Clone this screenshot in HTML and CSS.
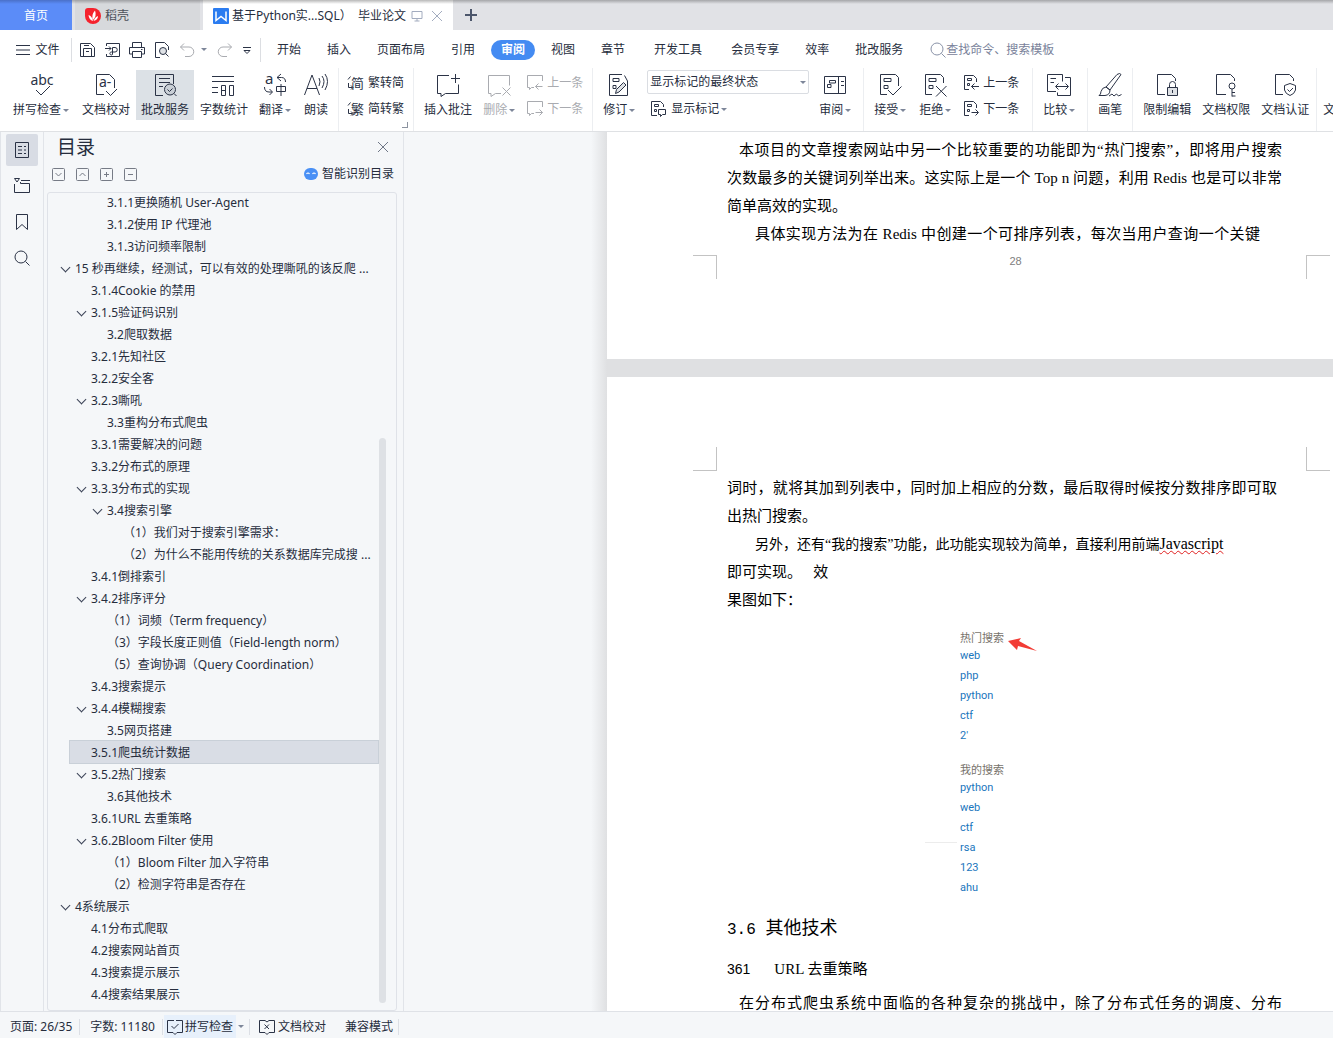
FILE: index.html
```html
<!DOCTYPE html>
<html lang="zh-CN">
<head>
    <meta charset="UTF-8">
    <title>毕业论文</title>
    <link rel="stylesheet" href="styles.css">
</head>
<body>
    <!-- icon sprite -->
    <svg class="sprite" aria-hidden="true">
        <symbol id="i-menu" viewBox="0 0 16 16"><path d="M1 3.500h14M1 8h14M1 12.500h14"/></symbol>
        <symbol id="i-save" viewBox="0 0 16 16"><path d="M.5 1.500h10l4 4v9h-14zM3.500 14.500v-8h8v8M4 3.500h5M6 9.500h3"/></symbol>
        <symbol id="i-export" viewBox="0 0 16 16"><path d="M1.500 4V1.500h13v13h-13V12M0 6.500h6M4 4.500l2 2-2 2M7.500 12.500v-7h2.500a2.200 2.200 0 0 1 0 4.500H6.500a1.500 1.500 0 1 0 1 2.500"/></symbol>
        <symbol id="i-print" viewBox="0 0 16 16"><path d="M3.500 5V.5h9V5M3.500 12H.5V5.500h15V12h-3M3.500 9.500h9v6h-9zM12 7.500h1.500"/></symbol>
        <symbol id="i-preview" viewBox="0 0 16 16"><path d="M6 15.500H1.500v-15h9l4 4V8"/><circle cx="9" cy="9" r="3.500" fill="#dfe2e6"/><path d="M11.500 11.500l3 3"/></symbol>
        <symbol id="i-undo" viewBox="0 0 16 16"><path d="M5 1.500L1.500 5 5 8.500M1.500 5H10a4.500 4.500 0 0 1 0 9.500H6"/></symbol>
        <symbol id="i-redo" viewBox="0 0 16 16"><path d="M11 1.500L14.500 5 11 8.500M14.500 5H6a4.500 4.500 0 0 0 0 9.500h4"/></symbol>
        <symbol id="i-more" viewBox="0 0 10 10"><path d="M1 2.500h8M2 5.500l3 3 3-3z"/></symbol>
        <symbol id="i-search" viewBox="0 0 16 16"><circle cx="7" cy="7" r="6"/><path d="M11.500 11.500l4 4"/></symbol>
        <symbol id="i-close" viewBox="0 0 12 12"><path d="M1 1l10 10M11 1L1 11"/></symbol>
        <symbol id="i-screen" viewBox="0 0 12 12"><path d="M1 1.500h10v7H1zM6 8.500v2.500M3.500 11h5"/></symbol>
        <symbol id="i-plus" viewBox="0 0 12 12"><path d="M6 0v12M0 6h12" stroke-width="2"/></symbol>

        <symbol id="i-abc" viewBox="0 0 24 24"><text x="12" y="12" font-size="14" text-anchor="middle">abc</text><path d="M6 17l5 5 9-9"/></symbol>
        <symbol id="i-proof" viewBox="0 0 24 24"><path d="M10 21.500H2.500v-20h13l5 5V15"/><text x="5" y="14" font-size="14">a-</text><path d="M12 18l4.500 4.500L23 16"/></symbol>
        <symbol id="i-review" viewBox="0 0 24 24"><path d="M10 22.500H2.500v-21h18V11M6 5.500h11M6 9.500h11M6 13.500h4"/><circle cx="17" cy="16.500" r="5.500" fill="#c9cfd6"/><path d="M14.500 16.500l2 2 3-3M21 20.500l2.500 2.500"/></symbol>
        <symbol id="i-count" viewBox="0 0 24 24"><path d="M0 3.500h22M0 8.500h22M0 14.500h6M0 19.500h6M9.500 12.500h4v10h-4zM17.500 12.500h4v10h-4zM9.500 17.500h4"/></symbol>
        <symbol id="i-trans" viewBox="0 0 24 24"><text x="1" y="11" font-size="15">a</text><path d="M17 1l-4 3.500 4 3.500M13 4.500h4.500q4 0 4 4.500M.5 14q0 5 4.500 5h3M5.500 16l3 3-3 3M12.500 13.500h9v5h-9zM17 11v12"/></symbol>
        <symbol id="i-read" viewBox="0 0 24 24"><path d="M.5 22L8 2l7.500 20M3 15.500h10M15 5q2 3.500 0 8M18 3q4 5 0 12M21 1q5 7 0 16"/></symbol>
        <symbol id="i-jian" viewBox="0 0 16 16"><text x="3" y="13" font-size="13">简</text><path d="M2.500 1.500L0 4.500M.5 8v4.500h4M3 10.500l2 2-2 2"/></symbol>
        <symbol id="i-fan" viewBox="0 0 16 16"><text x="3" y="13" font-size="13">繁</text><path d="M2.500 1.500L0 4.500M.5 8v4.500h4M3 10.500l2 2-2 2"/></symbol>
        <symbol id="i-note" viewBox="0 0 24 24"><path d="M13 2.500H1.500v18H5v3l4.500-3h13v-9M19.500 1v9M15 5.500h9"/></symbol>
        <symbol id="i-delnote" viewBox="0 0 24 24"><path d="M13 20.500H7.500l-4.500 3v-3H.5v-18h21v10M14.500 14.500l8 8M22.500 14.500l-8 8"/></symbol>
        <symbol id="i-prevnote" viewBox="0 0 16 16"><path d="M7 12.500H4.500l-2 2v-2h-2v-12h15V6M15.500 11.500H8.500M11.500 8.500l-3 3 3 3"/></symbol>
        <symbol id="i-nextnote" viewBox="0 0 16 16"><path d="M7 12.500H4.500l-2 2v-2h-2v-12h15V6M8.500 11.500h7M12.500 8.500l3 3-3 3"/></symbol>
        <symbol id="i-revise" viewBox="0 0 24 24"><path d="M14 1.500H1.500v21h18V8l-3-5.500M5 5.500h6v3H5zM5 12.500h3v3H5z"/><path d="M7.500 20.500l1-4 7-7 2.500 2.500-7 7z" fill="#dfe2e6"/></symbol>
        <symbol id="i-marks" viewBox="0 0 16 16"><path d="M6 14.500H.5v-14h9l3 3V6M3.500 3.500h4v2h-4zM3.500 8.500h2v2h-2z"/><path d="M7.500 8.500h7v5h-3l-2 2v-2h-2z" fill="#fff"/></symbol>
        <symbol id="i-pane" viewBox="0 0 24 24"><path d="M.5 3.500h21v17H.5zM14.500 3.500v17M3.500 11.500H7v3H3.500zM5.500 7.500h6v2.500h-6zM17 8.500h3M17 12.500h3"/></symbol>
        <symbol id="i-accept" viewBox="0 0 24 24"><path d="M8 21.500H1.500v-20h15l3 3V13M5 5.500h7v3H5zM5 12.500h4v3H5zM9 17l5 5 8.500-8.500"/></symbol>
        <symbol id="i-reject" viewBox="0 0 24 24"><path d="M8 21.500H1.500v-20h15l3 3V10M5 5.500h7v3H5zM5 12.500h4v3H5zM12 13l10.500 10.500M22.500 13L12 23.500"/></symbol>
        <symbol id="i-prevrev" viewBox="0 0 16 16"><path d="M6 14.500H1.500v-14h9l3 3V7M4.500 3.500h4v2h-4zM4.500 8.500h2v2h-2zM16 11.500H8.500M11.500 8.500l-3 3 3 3"/></symbol>
        <symbol id="i-nextrev" viewBox="0 0 16 16"><path d="M6 14.500H1.500v-14h9l3 3V7M4.500 3.500h4v2h-4zM4.500 8.500h2v2h-2zM8.500 11.500H15M12.500 8.500l3 3-3 3"/></symbol>
        <symbol id="i-compare" viewBox="0 0 24 24"><path d="M8 18.500H-.5v-17h15v7M2.500 5.500H8M2.500 9.500H6M17 4.500h5.500v18h-13v-3M8 13.500h12M10.500 10.500l-3 3 3 3M17.500 10.500l3 3-3 3"/></symbol>
        <symbol id="i-brush" viewBox="0 0 24 24"><path d="M8 14L19 1.500q3-2 4 0L12 17zM8 14l4 3q0 5-5 5.500H1q2-1 2-4 1-4 5-4.500M11 23l3-2 2 2 2.500-2 2 2 3-1.500"/></symbol>
        <symbol id="i-lock" viewBox="0 0 24 24"><path d="M10 21.500H2.500v-20h14l4 4V8"/><path d="M12.500 14.500h10v8h-10z" fill="#dfe2e6"/><path d="M14.500 14v-2.500a3 3 0 0 1 6 0V14M17.500 17v3"/></symbol>
        <symbol id="i-key" viewBox="0 0 24 24"><path d="M12 21.500H2.500v-20h14l4 4V8"/><circle cx="18" cy="13" r="3"/><path d="M18 16v7.500M18 19.500h3M18 23h3.500"/></symbol>
        <symbol id="i-shield" viewBox="0 0 24 24"><path d="M10 21.500H2.500v-20h14l4 4V8M17 10.500l5.500 2V17q-1 4-5.500 5.500-4.500-1.500-5.500-5.500v-4.500zM14.500 16.500l2 2 3.500-3.500"/></symbol>

        <symbol id="i-outline" viewBox="0 0 16 16"><path d="M1.500.5h13v15h-13zM4 4.500h4M10 4.500h2M4 8h4M10 8h2M4 11.500h4M10 11.500h2"/></symbol>
        <symbol id="i-chapter" viewBox="0 0 16 16"><path d="M.5 6v8.500h15v-9h-9V4M7 2.500h9M.5.500h5L3 4z"/></symbol>
        <symbol id="i-bookmark" viewBox="0 0 16 16"><path d="M2.500.5h11v15L8 10.500l-5.500 5z"/></symbol>
        <symbol id="i-boxdown" viewBox="0 0 13 13"><rect x=".5" y=".5" width="12" height="12" rx="1"/><path d="M3.500 5l3 3 3-3"/></symbol>
        <symbol id="i-boxup" viewBox="0 0 13 13"><rect x=".5" y=".5" width="12" height="12" rx="1"/><path d="M3.500 8l3-3 3 3"/></symbol>
        <symbol id="i-boxplus" viewBox="0 0 13 13"><rect x=".5" y=".5" width="12" height="12" rx="1"/><path d="M4 6.500h5M6.500 4v5"/></symbol>
        <symbol id="i-boxminus" viewBox="0 0 13 13"><rect x=".5" y=".5" width="12" height="12" rx="1"/><path d="M4 6.500h5"/></symbol>
        <symbol id="i-bookcheck" viewBox="0 0 16 16"><path d="M7 1.500H.5v12H6l2 2 2-2h5.500v-12H9M4.500 7l2.500 2.500L11.500 5"/></symbol>
        <symbol id="i-bookx" viewBox="0 0 16 16"><path d="M6 1.500H.5v12H6l2 2 2-2h5.500v-12H10L8 3 6 1.500M5.500 5.500l4.500 4.500M10 5.500L5.500 10"/></symbol>
    </svg>

    <header class="titlebar">
        <button class="tab tab-home">首页</button>
        <button class="tab tab-docer">
            <svg class="logo" viewBox="0 0 16 16"><path d="M3 0h5a8 8 0 1 1-8 8V3a3 3 0 0 1 3-3z" fill="#f5222d"/><path d="M8 13Q4 12 3.500 7 7 8 8 13zM8 12Q6 7 10 2.500 12 8 8 12zM8.500 13Q10 9 13 8q0 4-4.500 5z" fill="#fff"/></svg>
            <span>稻壳</span>
        </button>
        <div class="tab tab-doc">
            <svg class="logo" viewBox="0 0 16 16"><rect width="16" height="16" rx="1" fill="#2b7cf0"/><path d="M3 3.500v9l5-4 5 4v-9" fill="none" stroke="#fff" stroke-width="1.500"/></svg>
            <span class="tab-name">基于Python实...SQL）&nbsp; 毕业论文</span>
            <svg class="icon i12 pale"><use href="#i-screen"/></svg>
            <button class="plain" aria-label="关闭标签"><svg class="icon i12 pale"><use href="#i-close"/></svg></button>
        </div>
        <button class="plain new-tab" aria-label="新建"><svg class="icon i12"><use href="#i-plus"/></svg></button>
    </header>

    <nav class="menubar">
        <button class="plain file-menu"><svg class="icon i16"><use href="#i-menu"/></svg>文件</button>
        <div class="quick">
            <button class="plain" aria-label="保存"><svg class="icon i16"><use href="#i-save"/></svg></button>
            <button class="plain" aria-label="输出为PDF"><svg class="icon i16"><use href="#i-export"/></svg></button>
            <button class="plain" aria-label="打印"><svg class="icon i16"><use href="#i-print"/></svg></button>
            <button class="plain" aria-label="打印预览"><svg class="icon i16"><use href="#i-preview"/></svg></button>
            <button class="plain off caret" aria-label="撤销"><svg class="icon i16"><use href="#i-undo"/></svg></button>
            <button class="plain off" aria-label="恢复"><svg class="icon i16"><use href="#i-redo"/></svg></button>
            <button class="plain" aria-label="更多"><svg class="icon i10"><use href="#i-more"/></svg></button>
        </div>
        <div class="menus">
            <button class="plain menu">开始</button>
            <button class="plain menu">插入</button>
            <button class="plain menu">页面布局</button>
            <button class="plain menu">引用</button>
            <button class="plain menu current">审阅</button>
            <button class="plain menu">视图</button>
            <button class="plain menu">章节</button>
            <button class="plain menu wide">开发工具</button>
            <button class="plain menu">会员专享</button>
            <button class="plain menu">效率</button>
            <button class="plain menu">批改服务</button>
        </div>
        <label class="find">
            <svg class="icon i16"><use href="#i-search"/></svg>
            <input type="text" placeholder="查找命令、搜索模板" aria-label="查找命令、搜索模板">
        </label>
    </nav>

    <section class="ribbon">
        <div class="group first">
            <button class="big"><svg class="icon i24"><use href="#i-abc"/></svg><span class="caret">拼写检查</span></button>
            <button class="big"><svg class="icon i24"><use href="#i-proof"/></svg><span>文档校对</span></button>
            <button class="big pressed"><svg class="icon i24"><use href="#i-review"/></svg><span>批改服务</span></button>
            <button class="big"><svg class="icon i24"><use href="#i-count"/></svg><span>字数统计</span></button>
            <button class="big"><svg class="icon i24"><use href="#i-trans"/></svg><span class="caret">翻译</span></button>
            <button class="big"><svg class="icon i24"><use href="#i-read"/></svg><span>朗读</span></button>
        </div>
        <div class="group corner">
            <div class="stack">
                <button class="small"><svg class="icon i16"><use href="#i-jian"/></svg>繁转简</button>
                <button class="small"><svg class="icon i16"><use href="#i-fan"/></svg>简转繁</button>
            </div>
        </div>
        <div class="group">
            <button class="big"><svg class="icon i24"><use href="#i-note"/></svg><span>插入批注</span></button>
            <button class="big off"><svg class="icon i24"><use href="#i-delnote"/></svg><span class="caret">删除</span></button>
            <div class="stack">
                <button class="small off"><svg class="icon i16"><use href="#i-prevnote"/></svg>上一条</button>
                <button class="small off"><svg class="icon i16"><use href="#i-nextnote"/></svg>下一条</button>
            </div>
        </div>
        <div class="group">
            <button class="big"><svg class="icon i24"><use href="#i-revise"/></svg><span class="caret">修订</span></button>
            <div class="stack display">
                <div class="select-box caret">
                    <select aria-label="显示状态">
                        <option>显示标记的最终状态</option>
                        <option>最终状态</option>
                        <option>显示标记的原始状态</option>
                        <option>原始状态</option>
                    </select>
                </div>
                <button class="small"><svg class="icon i16"><use href="#i-marks"/></svg><span class="caret">显示标记</span></button>
            </div>
            <button class="big"><svg class="icon i24"><use href="#i-pane"/></svg><span class="caret">审阅</span></button>
        </div>
        <div class="group">
            <button class="big"><svg class="icon i24"><use href="#i-accept"/></svg><span class="caret">接受</span></button>
            <button class="big"><svg class="icon i24"><use href="#i-reject"/></svg><span class="caret">拒绝</span></button>
            <div class="stack loose">
                <button class="small"><svg class="icon i16"><use href="#i-prevrev"/></svg>上一条</button>
                <button class="small"><svg class="icon i16"><use href="#i-nextrev"/></svg>下一条</button>
            </div>
        </div>
        <div class="group">
            <button class="big"><svg class="icon i24"><use href="#i-compare"/></svg><span class="caret">比较</span></button>
        </div>
        <div class="group">
            <button class="big"><svg class="icon i24"><use href="#i-brush"/></svg><span>画笔</span></button>
        </div>
        <div class="group last">
            <button class="big"><svg class="icon i24"><use href="#i-lock"/></svg><span>限制编辑</span></button>
            <button class="big"><svg class="icon i24"><use href="#i-key"/></svg><span>文档权限</span></button>
            <button class="big"><svg class="icon i24"><use href="#i-shield"/></svg><span>文档认证</span></button>
        </div>
        <div class="group more">
            <button class="big"><span>文</span></button>
        </div>
    </section>

    <main class="main">
        <aside class="rail">
            <button class="plain active" aria-label="目录"><svg class="icon i16"><use href="#i-outline"/></svg></button>
            <button class="plain" aria-label="章节"><svg class="icon i16"><use href="#i-chapter"/></svg></button>
            <button class="plain" aria-label="书签"><svg class="icon i16"><use href="#i-bookmark"/></svg></button>
            <button class="plain" aria-label="查找"><svg class="icon i16"><use href="#i-search"/></svg></button>
        </aside>

        <aside class="outline">
            <div class="outline-head">
                <h2>目录</h2>
                <button class="plain" aria-label="关闭"><svg class="icon i12 gray"><use href="#i-close"/></svg></button>
            </div>
            <div class="outline-tools">
                <button class="plain" aria-label="展开"><svg class="icon i13"><use href="#i-boxdown"/></svg></button>
                <button class="plain" aria-label="收起"><svg class="icon i13"><use href="#i-boxup"/></svg></button>
                <button class="plain" aria-label="增加级别"><svg class="icon i13"><use href="#i-boxplus"/></svg></button>
                <button class="plain" aria-label="减少级别"><svg class="icon i13"><use href="#i-boxminus"/></svg></button>
                <button class="plain smart">
                    <svg class="robot" viewBox="0 0 14 12"><rect width="14" height="12" rx="6" fill="#4a90f5"/><path d="M2.500 6q1.500-2 3 0M8.500 6q1.500-2 3 0" fill="none" stroke="#fff" stroke-width="1.200"/></svg>
                    智能识别目录
                </button>
            </div>
            <div class="tree">
                <ul>
                    <li class="l2">3.1.1更换随机 User-Agent</li>
                    <li class="l2">3.1.2使用 IP 代理池</li>
                    <li class="l2">3.1.3访问频率限制</li>
                    <li class="l0 open">15 秒再继续，经测试，可以有效的处理嘶吼的该反爬 ...</li>
                    <li class="l1">3.1.4Cookie 的禁用</li>
                    <li class="l1 open">3.1.5验证码识别</li>
                    <li class="l2">3.2爬取数据</li>
                    <li class="l1">3.2.1先知社区</li>
                    <li class="l1">3.2.2安全客</li>
                    <li class="l1 open">3.2.3嘶吼</li>
                    <li class="l2">3.3重构分布式爬虫</li>
                    <li class="l1">3.3.1需要解决的问题</li>
                    <li class="l1">3.3.2分布式的原理</li>
                    <li class="l1 open">3.3.3分布式的实现</li>
                    <li class="l2 open">3.4搜索引擎</li>
                    <li class="l3">（1）我们对于搜索引擎需求：</li>
                    <li class="l3">（2）为什么不能用传统的关系数据库完成搜 ...</li>
                    <li class="l1">3.4.1倒排索引</li>
                    <li class="l1 open">3.4.2排序评分</li>
                    <li class="l2">（1）词频（Term frequency）</li>
                    <li class="l2">（3）字段长度正则值（Field-length norm）</li>
                    <li class="l2">（5）查询协调（Query Coordination）</li>
                    <li class="l1">3.4.3搜索提示</li>
                    <li class="l1 open">3.4.4模糊搜索</li>
                    <li class="l2">3.5网页搭建</li>
                    <li class="l1 selected">3.5.1爬虫统计数据</li>
                    <li class="l1 open">3.5.2热门搜索</li>
                    <li class="l2">3.6其他技术</li>
                    <li class="l1">3.6.1URL 去重策略</li>
                    <li class="l1 open">3.6.2Bloom Filter 使用</li>
                    <li class="l2">（1）Bloom Filter 加入字符串</li>
                    <li class="l2">（2）检测字符串是否存在</li>
                    <li class="l0 open">4系统展示</li>
                    <li class="l1">4.1分布式爬取</li>
                    <li class="l1">4.2搜索网站首页</li>
                    <li class="l1">4.3搜索提示展示</li>
                    <li class="l1">4.4搜索结果展示</li>
                </ul>
                <div class="scrollbar"></div>
            </div>
        </aside>

        <div class="workspace">
            <article class="page page-one">
                <div class="text">
                    <p class="line first-line">本项目的文章搜索网站中另一个比较重要的功能即为“热门搜索”，即将用户搜索</p>
                    <p class="line">次数最多的关键词列举出来。这实际上是一个 Top n 问题，利用 Redis 也是可以非常</p>
                    <p class="line end">简单高效的实现。</p>
                    <p class="line indent">具体实现方法为在 Redis 中创建一个可排序列表，每次当用户查询一个关键</p>
                </div>
                <div class="marks bottom"><i></i><span>28</span><i></i></div>
            </article>

            <article class="page page-two">
                <div class="marks top"><i></i><i></i></div>
                <div class="text">
                    <p class="line short">词时，就将其加到列表中，同时加上相应的分数，最后取得时候按分数排序即可取</p>
                    <p class="line end">出热门搜索。</p>
                    <p class="line end tight">另外，还有“我的搜索”功能，此功能实现较为简单，直接利用前端<span class="typo">Javascript</span></p>
                    <p class="line end">即可实现。&nbsp;&nbsp; 效</p>
                    <p class="line end">果图如下：</p>
                </div>
                <figure class="shot">
                    <div class="shot-title">热门搜索
                        <svg class="arrow" viewBox="0 0 30 14"><path d="M0 3L13 0 11 3 29 13 10 8 9 12z" fill="#f23c35"/></svg>
                    </div>
                    <ul>
                        <li>web</li>
                        <li>php</li>
                        <li>python</li>
                        <li>ctf</li>
                        <li>2'</li>
                    </ul>
                    <div class="shot-title">我的搜索</div>
                    <ul>
                        <li>python</li>
                        <li>web</li>
                        <li>ctf</li>
                        <li class="ruled">rsa</li>
                        <li>123</li>
                        <li>ahu</li>
                    </ul>
                </figure>
                <div class="text">
                    <h3><span>3.6 </span>其他技术</h3>
                    <h4><span>361</span>URL 去重策略</h4>
                    <p class="line first-line">在分布式爬虫系统中面临的各种复杂的挑战中，除了分布式任务的调度、分布</p>
                </div>
            </article>
        </div>
    </main>

    <footer class="status">
        <span class="cell">页面: 26/35</span>
        <span class="cell">字数: 11180</span>
        <button class="plain spell"><svg class="icon i16"><use href="#i-bookcheck"/></svg>拼写检查</button>
        <button class="plain spell-more caret" aria-label="拼写选项"></button>
        <button class="plain proof"><svg class="icon i16"><use href="#i-bookx"/></svg>文档校对</button>
        <span class="cell compat">兼容模式</span>
    </footer>
</body>
</html>
```

FILE: styles.css
```css
* {
    margin: 0;
    padding: 0;
    box-sizing: border-box;
}

body {
    display: flex;
    flex-direction: column;
    height: 100vh;
    overflow: hidden;
    background-color: #f5f7f9;
    color: #262d3d;
    font-family: "Noto Sans", "Noto Sans CJK SC", sans-serif;
    font-size: 12px;
    line-height: 16px;
}

button,
input,
select {
    font: inherit;
    color: inherit;
    border: none;
    background: none;
}

ul {
    list-style: none;
}

/* icons */
.sprite {
    display: none;
}

.icon {
    display: block;
    flex: none;
    fill: none;
    stroke: #2b3346;
    overflow: visible;
}

symbol {
    overflow: visible;
}

symbol text {
    fill: #2b3346;
    stroke: none;
}

.i10 { width: 10px; height: 10px; }
.i12 { width: 12px; height: 12px; }
.i13 { width: 13px; height: 13px; }
.i16 { width: 16px; height: 16px; }
.i24 { width: 24px; height: 24px; }

.pale { stroke: #a3acbf; }
.gray { stroke: #6f7787; }

.plain {
    display: flex;
    align-items: center;
    justify-content: center;
    gap: 4px;
    white-space: nowrap;
}

.off {
    color: #a9abb0;
}

.off .icon {
    stroke: #a9abb0;
}

.caret {
    display: flex;
    align-items: center;
}

.caret::after {
    content: "";
    margin: 0 2px 0 2px;
    border: 3px solid transparent;
    border-top-color: #7d8699;
    border-bottom: none;
}

/* window tabs */
.titlebar {
    display: flex;
    flex: none;
    height: 30px;
    background: linear-gradient(#a5a6a9, #e1e2e6 4px);
}

.tab {
    display: flex;
    align-items: center;
    padding-top: 2px;
    white-space: nowrap;
}

.tab-home {
    justify-content: center;
    width: 72px;
    background: linear-gradient(#4a70c8, #5b8cf8 4px);
    color: #fff;
}

.tab-docer {
    width: 125px;
    margin: 0 3px;
    padding-left: 10px;
    gap: 4px;
    background: linear-gradient(#9fa0a3, #d7d9dc 4px);
    color: #4d515a;
}

.tab-doc {
    width: 250px;
    padding-left: 10px;
    padding-right: 10px;
    background: linear-gradient(#b8b8b8, #fff 4px);
}

.tab-name {
    flex: 1;
    margin-left: 3px;
}

.tab-doc .plain {
    margin-left: 8px;
}

.tab .logo {
    width: 16px;
    height: 16px;
}

.new-tab {
    width: 36px;
}

.new-tab .icon {
    stroke: #4c566b;
}

/* menu bar */
.menubar {
    display: flex;
    flex: none;
    align-items: center;
    height: 38px;
    padding-top: 1px;
    background-color: #fff;
}

.file-menu {
    width: 72px;
    height: 24px;
    padding-left: 4px;
    border-right: 1px solid #dcdee2;
}

.quick {
    display: flex;
    align-items: center;
    justify-content: space-between;
    width: 189px;
    height: 24px;
    padding: 0 8px;
    border-right: 1px solid #dcdee2;
}

.menus {
    display: flex;
    padding-left: 3px;
}

.menu {
    height: 20px;
    padding: 0 13px;
}

.menu.wide {
    margin: 0 3px;
}

.menu.current {
    margin: 0 3px;
    padding: 0 10px;
    border-radius: 10px;
    background-color: #448bf2;
    color: #fff;
    font-weight: bold;
}

.find {
    display: flex;
    align-items: center;
    margin-left: 14px;
}

.find .icon {
    stroke: #8a93a8;
}

.find input {
    width: 130px;
    outline: none;
}

.find input::placeholder {
    color: #79829a;
    opacity: 1;
}

/* ribbon */
.ribbon {
    display: flex;
    flex: none;
    height: 64px;
    background-color: #fff;
    border-bottom: 1px solid #dfe1e4;
    overflow: hidden;
}

.group {
    position: relative;
    display: flex;
    flex: none;
    align-items: flex-start;
    gap: 1px;
    padding: 2px 5px;
    border-right: 1px solid #eceef1;
}

.group.first {
    padding-left: 8px;
}

.group.last {
    padding-right: 2px;
}

.group.more {
    padding-left: 1px;
    border: none;
}

.corner::after {
    content: "";
    position: absolute;
    right: 5px;
    bottom: 3px;
    width: 5px;
    height: 5px;
    border: solid #8c93a0;
    border-width: 0 1px 1px 0;
}

.big {
    display: flex;
    flex-direction: column;
    align-items: center;
    justify-content: flex-end;
    gap: 5px;
    height: 50px;
    padding: 3px 5px 2px;
    white-space: nowrap;
}

.big.pressed {
    background-color: #dce1e6;
}

.stack {
    display: flex;
    flex-direction: column;
    gap: 2px;
}

.stack.loose {
    padding-right: 4px;
}

.stack.display {
    width: 162px;
    margin: 0 4px;
}

.small {
    display: flex;
    align-items: center;
    gap: 4px;
    height: 24px;
    padding: 2px 4px 0;
    white-space: nowrap;
}

.select-box {
    height: 24px;
    border: 1px solid #dadde2;
    border-radius: 2px;
}

.select-box select {
    flex: 1;
    padding-left: 2px;
    appearance: none;
    outline: none;
}

/* body */
.main {
    display: flex;
    flex: 1;
    min-height: 0;
}

.rail {
    display: flex;
    flex: none;
    flex-direction: column;
    gap: 4px;
    width: 44px;
    padding: 2px 5px;
    border: solid #e1e4e9;
    border-width: 0 1px;
}

.rail .plain {
    width: 32px;
    height: 32px;
    border-radius: 2px;
}

.rail .active {
    background-color: #d8dce4;
}

.outline {
    display: flex;
    flex: none;
    flex-direction: column;
    width: 360px;
    padding: 0 6px 0 3px;
    border-right: 1px solid #e1e4e9;
}

.outline-head {
    display: flex;
    align-items: center;
    justify-content: space-between;
    height: 30px;
    padding: 0 8px 0 10px;
}

.outline-head h2 {
    font-size: 19px;
    font-weight: normal;
}

.outline-tools {
    display: flex;
    align-items: center;
    gap: 11px;
    height: 24px;
    margin-bottom: 6px;
    padding: 0 3px 0 5px;
}

.outline-tools .icon {
    stroke: #767b86;
}

.smart {
    margin-left: auto;
}

.robot {
    width: 14px;
    height: 12px;
}

.tree {
    position: relative;
    flex: 1;
    overflow: hidden;
    border: 1px solid #dfe2e8;
    border-radius: 3px;
}

.tree ul {
    margin: -2px 18px 0 22px;
}

.tree li {
    position: relative;
    height: 22px;
    line-height: 24px;
    white-space: pre;
}

.l0 { padding-left: 5px; }
.l1 { padding-left: 21px; }
.l2 { padding-left: 37px; }
.l3 { padding-left: 53px; }

.open::before {
    content: "";
    position: absolute;
    top: 7px;
    width: 6px;
    height: 6px;
    margin-left: -13px;
    border: solid #3b4356;
    border-width: 0 1px 1px 0;
    transform: rotate(45deg);
}

.selected {
    background-color: #d9dde5;
    outline: 1px solid #c9d0d8;
}

.scrollbar {
    position: absolute;
    top: 30%;
    right: 10px;
    bottom: 7px;
    width: 7px;
    border-radius: 4px;
    background-color: #dee1e5;
}

/* document */
.workspace {
    flex: 1;
    display: flex;
    flex-direction: column;
    gap: 18px;
    min-width: 0;
    padding-left: 203px;
    overflow: hidden;
    background: linear-gradient(to right, #f5f7f9 187px, #dfe0e2 203px);
    color: #000;
    font-family: "Liberation Serif", "Noto Sans CJK SC", serif;
    font-size: 15px;
}

.page {
    flex: none;
    background-color: #fff;
}

.page-one {
    height: 227px;
    padding-top: 4px;
}

.page-two {
    flex: 1;
    padding-top: 70px;
}

.text {
    padding: 0 51px 0 120px;
}

.line {
    height: 28px;
    line-height: 28px;
    white-space: nowrap;
    text-align-last: justify;
}

.line.end {
    text-align-last: left;
}

.first-line {
    padding-left: 12px;
}

.indent {
    padding: 0 22px 0 28px;
}

.short {
    padding-right: 5px;
}

.tight {
    padding-left: 28px;
    font-size: 14px;
}

.typo {
    font-size: 16px;
    text-decoration: underline wavy #e02020 1px;
}

.marks {
    display: flex;
    justify-content: space-between;
    height: 24px;
    padding: 0 3px 0 86px;
    color: #808080;
    font-family: "Liberation Sans", sans-serif;
    font-size: 11px;
    line-height: 12px;
}

.marks i {
    width: 24px;
    border: solid #c3c3c3;
    border-width: 0 1px 0 0;
}

.marks i:last-child {
    border-width: 0 0 0 1px;
}

.marks span {
    padding-left: 8px;
}

.marks.bottom {
    margin-top: 7px;
}

.marks.bottom i {
    border-top-width: 1px;
}

.marks.top {
    margin-bottom: 3px;
}

.marks.top i {
    border-bottom-width: 1px;
}

/* embedded result list */
.shot {
    margin: 17px 0 0 353px;
    color: #1b76bd;
    font-family: Roboto, "Noto Sans CJK SC", sans-serif;
    font-size: 11px;
}

.shot-title {
    display: flex;
    align-items: center;
    gap: 4px;
    height: 15px;
    color: #77736c;
}

.arrow {
    width: 30px;
    height: 14px;
    margin-top: 12px;
}

.shot ul {
    padding-bottom: 17px;
}

.shot li {
    height: 20px;
    line-height: 20px;
}

.ruled::before {
    content: "";
    position: absolute;
    width: 32px;
    margin: 4px 0 0 -35px;
    border-top: 1px solid #ececec;
}

h3 {
    font-family: "Liberation Mono", "Noto Sans CJK SC", monospace;
    font-size: 18px;
    font-weight: normal;
    line-height: 28px;
    white-space: pre;
}

h3 span {
    font-size: 16px;
}

h4 {
    padding: 11px 0 6px;
    font-size: 15px;
    font-weight: normal;
    line-height: 28px;
}

h4 span {
    margin-right: 24px;
    font-family: "Liberation Sans", sans-serif;
    font-size: 14px;
}

/* status bar */
.status {
    display: flex;
    flex: none;
    align-items: center;
    height: 27px;
    padding-top: 3px;
    border-top: 1px solid #dfe2e7;
}

.cell {
    padding: 0 7px 0 10px;
    border-right: 1px solid #dcdfe5;
    white-space: nowrap;
}

.spell {
    height: 24px;
    margin-left: 1px;
    padding: 0 3px;
    gap: 2px;
    background-color: #e7f0fb;
}

.spell-more {
    height: 16px;
    margin-right: 9px;
    padding-right: 3px;
    gap: 0;
    border-right: 1px solid #dcdfe5;
}

.proof {
    gap: 3px;
}

.compat {
    padding: 0 5px 0 19px;
}
```
